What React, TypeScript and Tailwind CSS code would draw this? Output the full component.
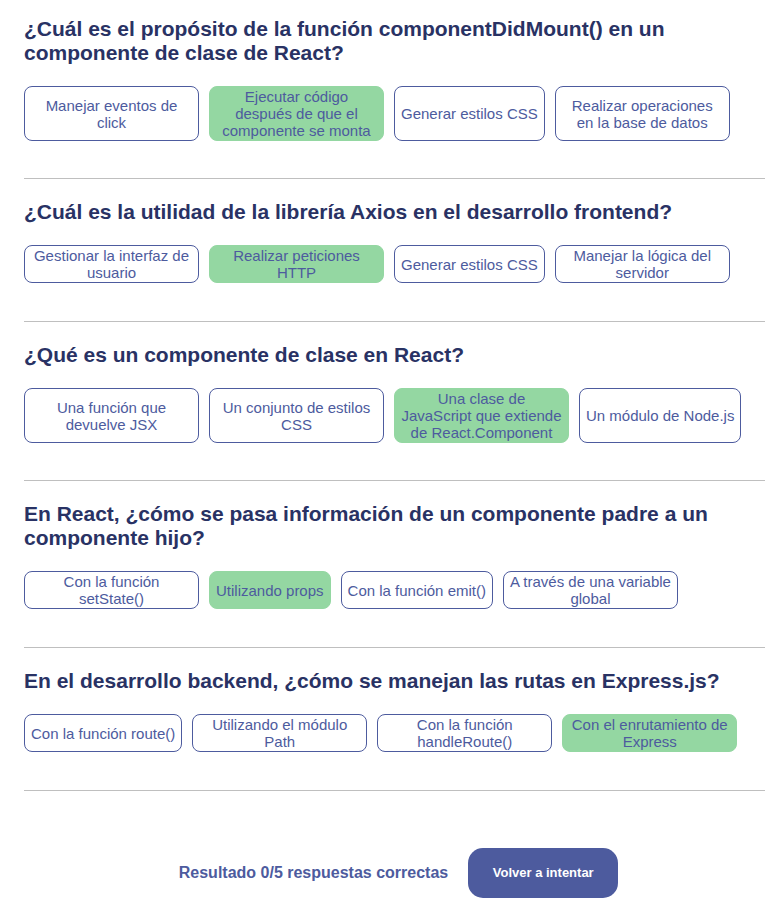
import React from "react";

type Question = { text: string; options: string[]; correct: number };

const questions: Question[] = [
  {
    text: "¿Cuál es el propósito de la función componentDidMount() en un componente de clase de React?",
    options: [
      "Manejar eventos de click",
      "Ejecutar código después de que el componente se monta",
      "Generar estilos CSS",
      "Realizar operaciones en la base de datos",
    ],
    correct: 1,
  },
  {
    text: "¿Cuál es la utilidad de la librería Axios en el desarrollo frontend?",
    options: [
      "Gestionar la interfaz de usuario",
      "Realizar peticiones HTTP",
      "Generar estilos CSS",
      "Manejar la lógica del servidor",
    ],
    correct: 1,
  },
  {
    text: "¿Qué es un componente de clase en React?",
    options: [
      "Una función que devuelve JSX",
      "Un conjunto de estilos CSS",
      "Una clase de JavaScript que extiende de React.Component",
      "Un módulo de Node.js",
    ],
    correct: 2,
  },
  {
    text: "En React, ¿cómo se pasa información de un componente padre a un componente hijo?",
    options: [
      "Con la función setState()",
      "Utilizando props",
      "Con la función emit()",
      "A través de una variable global",
    ],
    correct: 1,
  },
  {
    text: "En el desarrollo backend, ¿cómo se manejan las rutas en Express.js?",
    options: [
      "Con la función route()",
      "Utilizando el módulo Path",
      "Con la función handleRoute()",
      "Con el enrutamiento de Express",
    ],
    correct: 3,
  },
];

function QuestionBlock({ question }: { question: Question }) {
  return (
    <section className="mb-[21px] border-b border-[#bfbfbf] pb-[37px]">
      <h2 className="mb-[21px] text-[21px] leading-6 font-bold text-[#293264]">{question.text}</h2>
      <div className="flex min-h-[39px] flex-wrap content-start gap-[10px]">
        {question.options.map((option, i) => (
          <button
            key={option}
            type="button"
            className={
              "max-w-[175px] rounded-lg border px-[6px] py-px text-center text-[15px] leading-[17px] text-[#4d5b9e] " +
              (i === question.correct ? "border-[#94d7a2] bg-[#94d7a2]" : "border-[#4d5b9e] bg-white")
            }
          >
            {option}
          </button>
        ))}
      </div>
    </section>
  );
}

export default function App() {
  return (
    <main className="bg-white pt-[17px] pb-[9px] pl-6 font-['Liberation_Sans',Arial,sans-serif]">
      {questions.map((q) => (
        <QuestionBlock key={q.text} question={q} />
      ))}
      <div className="mt-[57px] flex items-center justify-center gap-5 pl-2">
        <p className="text-base font-bold text-[#4d5b9e]">Resultado 0/5 respuestas correctas</p>
        <button
          type="button"
          className="h-[50px] w-[150px] rounded-[15px] bg-[#4d5b9e] text-[13px] font-bold text-white"
        >
          Volver a intentar
        </button>
      </div>
    </main>
  );
}
